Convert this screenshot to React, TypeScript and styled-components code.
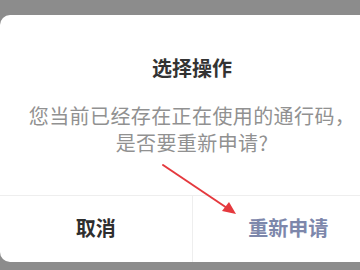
import React from 'react';
import styled, { createGlobalStyle } from 'styled-components';

const GlobalStyle = createGlobalStyle`
  html, body {
    margin: 0;
    padding: 0;
    width: 360px;
    height: 270px;
    overflow: hidden;
    background: #8c8c8c;
    font-family: 'Noto Sans CJK SC', 'Noto Sans', sans-serif;
  }
`;

const Screen = styled.div`
  position: relative;
  width: 360px;
  height: 270px;
  overflow: hidden;
  padding-top: 15px;
  box-sizing: border-box;
`;

const Dialog = styled.div`
  width: 384px;
  height: 247px;
  background: #fff;
  border-radius: 10px;
  display: flex;
  flex-direction: column;
`;

const Body = styled.div`
  flex: 1;
  display: flex;
  flex-direction: column;
  align-items: center;
  padding-top: 41px;
`;

const Title = styled.div`
  font-size: 20px;
  line-height: 24px;
  font-weight: 700;
  color: #333;
`;

const Message = styled.div`
  margin-top: 22px;
  font-size: 20px;
  line-height: 27px;
  color: #919191;
  text-align: center;
  letter-spacing: 0.4px;
`;

const Footer = styled.div`
  height: 66px;
  display: flex;
  border-top: 1px solid #eeeeee;
`;

const Action = styled.button<{ $primary?: boolean }>`
  flex: 1;
  border: none;
  background: transparent;
  font-family: inherit;
  font-size: 20px;
  font-weight: 700;
  padding: 0 0 3px;
  color: ${(p) => (p.$primary ? '#7d87ab' : '#2e2e2e')};
  & + & {
    border-left: 1px solid #eeeeee;
  }
`;

const Annotation = styled.svg`
  position: absolute;
  left: 0;
  top: 0;
  pointer-events: none;
`;

const App: React.FC = () => {
  return (
    <>
      <GlobalStyle />
      <Screen>
        <Dialog>
          <Body>
            <Title>选择操作</Title>
            <Message>
              您当前已经存在正在使用的通行码，
              <br />
              是否要重新申请?
            </Message>
          </Body>
          <Footer>
            <Action>取消</Action>
            <Action $primary>重新申请</Action>
          </Footer>
        </Dialog>
        <Annotation width="360" height="270" viewBox="0 0 360 270">
          <line x1="163" y1="165" x2="230" y2="210" stroke="#e5393e" strokeWidth="2" strokeLinecap="round" />
          <polygon points="236,214 222,211 229,202" fill="#e5393e" />
        </Annotation>
      </Screen>
    </>
  );
};

export default App;
